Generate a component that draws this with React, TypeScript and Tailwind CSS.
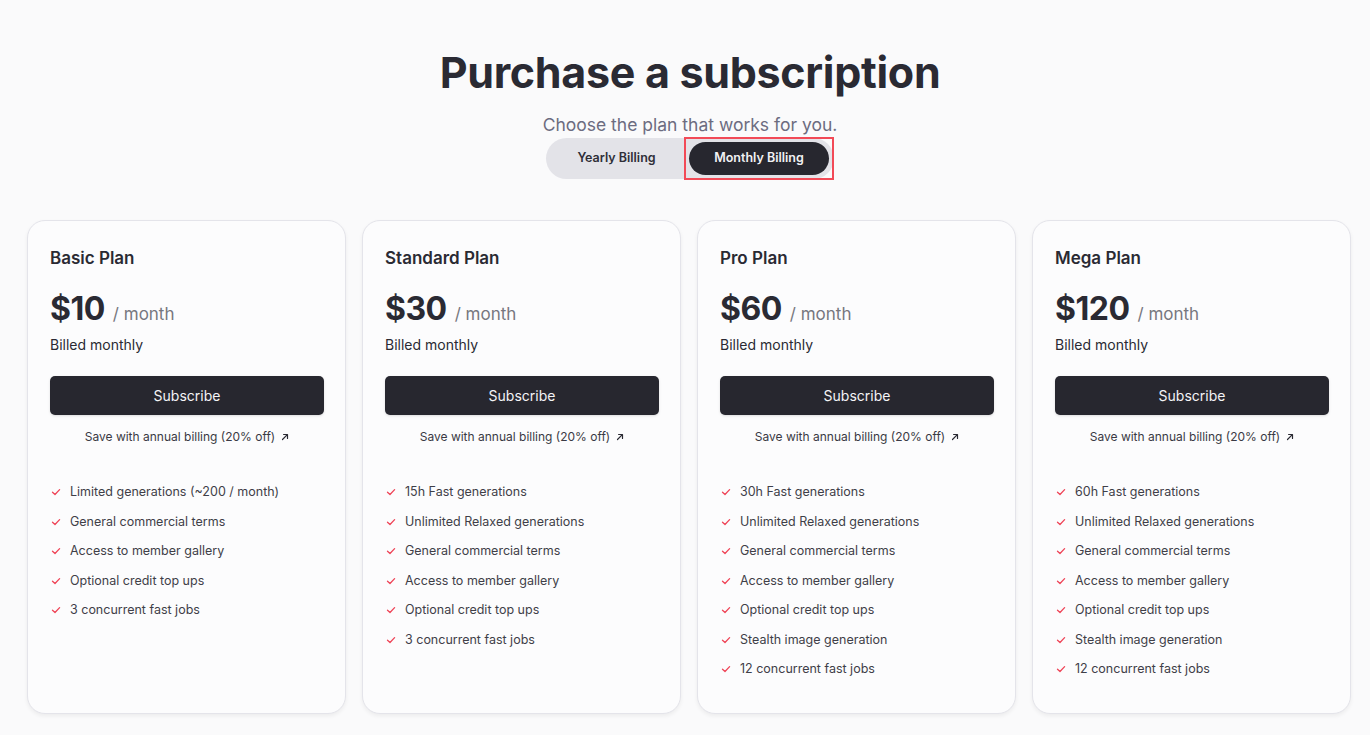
import React from 'react';

interface Plan {
  name: string;
  price: string;
  features: string[];
}

const plans: Plan[] = [
  {
    name: 'Basic Plan',
    price: '$10',
    features: [
      'Limited generations (~200 / month)',
      'General commercial terms',
      'Access to member gallery',
      'Optional credit top ups',
      '3 concurrent fast jobs',
    ],
  },
  {
    name: 'Standard Plan',
    price: '$30',
    features: [
      '15h Fast generations',
      'Unlimited Relaxed generations',
      'General commercial terms',
      'Access to member gallery',
      'Optional credit top ups',
      '3 concurrent fast jobs',
    ],
  },
  {
    name: 'Pro Plan',
    price: '$60',
    features: [
      '30h Fast generations',
      'Unlimited Relaxed generations',
      'General commercial terms',
      'Access to member gallery',
      'Optional credit top ups',
      'Stealth image generation',
      '12 concurrent fast jobs',
    ],
  },
  {
    name: 'Mega Plan',
    price: '$120',
    features: [
      '60h Fast generations',
      'Unlimited Relaxed generations',
      'General commercial terms',
      'Access to member gallery',
      'Optional credit top ups',
      'Stealth image generation',
      '12 concurrent fast jobs',
    ],
  },
];

const Check = () => (
  <svg width="10" height="10" viewBox="0 0 10 10" fill="none" className="shrink-0">
    <path d="M1.5 5.2 L4 7.5 L8.6 2.6" stroke="#ef4457" strokeWidth="1.3" strokeLinecap="round" strokeLinejoin="round" />
  </svg>
);

const ArrowUpRight = () => (
  <svg width="8" height="8" viewBox="0 0 8 8" fill="none" className="inline-block ml-[6px] -mt-[2px]">
    <path d="M1.5 6.5 L6.3 1.7 M2.6 1.5 H6.5 V5.4" stroke="#2a2a33" strokeWidth="1.2" strokeLinecap="round" strokeLinejoin="round" />
  </svg>
);

const PlanCard: React.FC<{ plan: Plan }> = ({ plan }) => (
  <div className="flex flex-col h-[494px] rounded-[18px] border border-[#e4e4ea] bg-[#fcfcfd] shadow-[0_2px_4px_rgba(0,0,0,0.06)] pl-[22px] pr-[21px] pt-[25px]">
    <h2 className="text-[17px] leading-[24px] font-semibold text-[#2a2a33]">{plan.name}</h2>
    <div className="mt-[19px] flex items-baseline">
      <span className="text-[32px] leading-[40px] font-bold text-[#2a2a33] tracking-[-0.5px]">{plan.price}</span>
      <span className="ml-[8px] text-[17px] text-[#77777f]">/ month</span>
    </div>
    <p className="mt-[6px] text-[14px] leading-[20px] text-[#2a2a33]">Billed monthly</p>
    <button className="mt-[21px] h-[39px] shrink-0 w-full rounded-[5px] bg-[#27272f] text-[14px] text-[#f4f4f6] shadow-sm">
      Subscribe
    </button>
    <p className="mt-[13px] text-center text-[12px] leading-[18px] text-[#3a3a44]">
      Save with annual billing (20% off)
      <ArrowUpRight />
    </p>
    <ul className="mt-[37px] flex flex-col gap-[11.5px]">
      {plan.features.map((f) => (
        <li key={f} className="flex items-center gap-[9px] pl-[1px] text-[12.5px] leading-[18px] text-[#3f3f48]">
          <Check />
          {f}
        </li>
      ))}
    </ul>
  </div>
);

export default function App() {
  return (
    <div className="min-h-screen bg-[#fafafb] font-['Inter',sans-serif] pt-[42px]">
      <div className="flex flex-col items-center pl-[10px]">
        <h1 className="text-[43px] leading-[60px] font-bold text-[#2a2a33] tracking-[-0.3px]">Purchase a subscription</h1>
        <p className="mt-[12px] text-[17.5px] leading-[22px] text-[#6c6c80]">Choose the plan that works for you.</p>
        <div className="mt-[2px] flex items-center h-[41px] w-[288px] rounded-full bg-[#e3e3e8] pl-[4px]">
          <button className="w-[136px] h-[33px] rounded-full text-[12.5px] font-semibold text-[#2f2f38]">Yearly Billing</button>
          <div className="ml-[1px] p-[3px] border-2 border-[#f24a57]">
            <button className="w-[140px] h-[33px] rounded-full bg-[#27272f] text-[12.5px] font-semibold text-[#f2f2f4]">
              Monthly Billing
            </button>
          </div>
        </div>
      </div>
      <div className="mt-[41px] grid grid-cols-4 gap-[16px] pl-[27px] pr-[19px]">
        {plans.map((p) => (
          <PlanCard key={p.name} plan={p} />
        ))}
      </div>
    </div>
  );
}
